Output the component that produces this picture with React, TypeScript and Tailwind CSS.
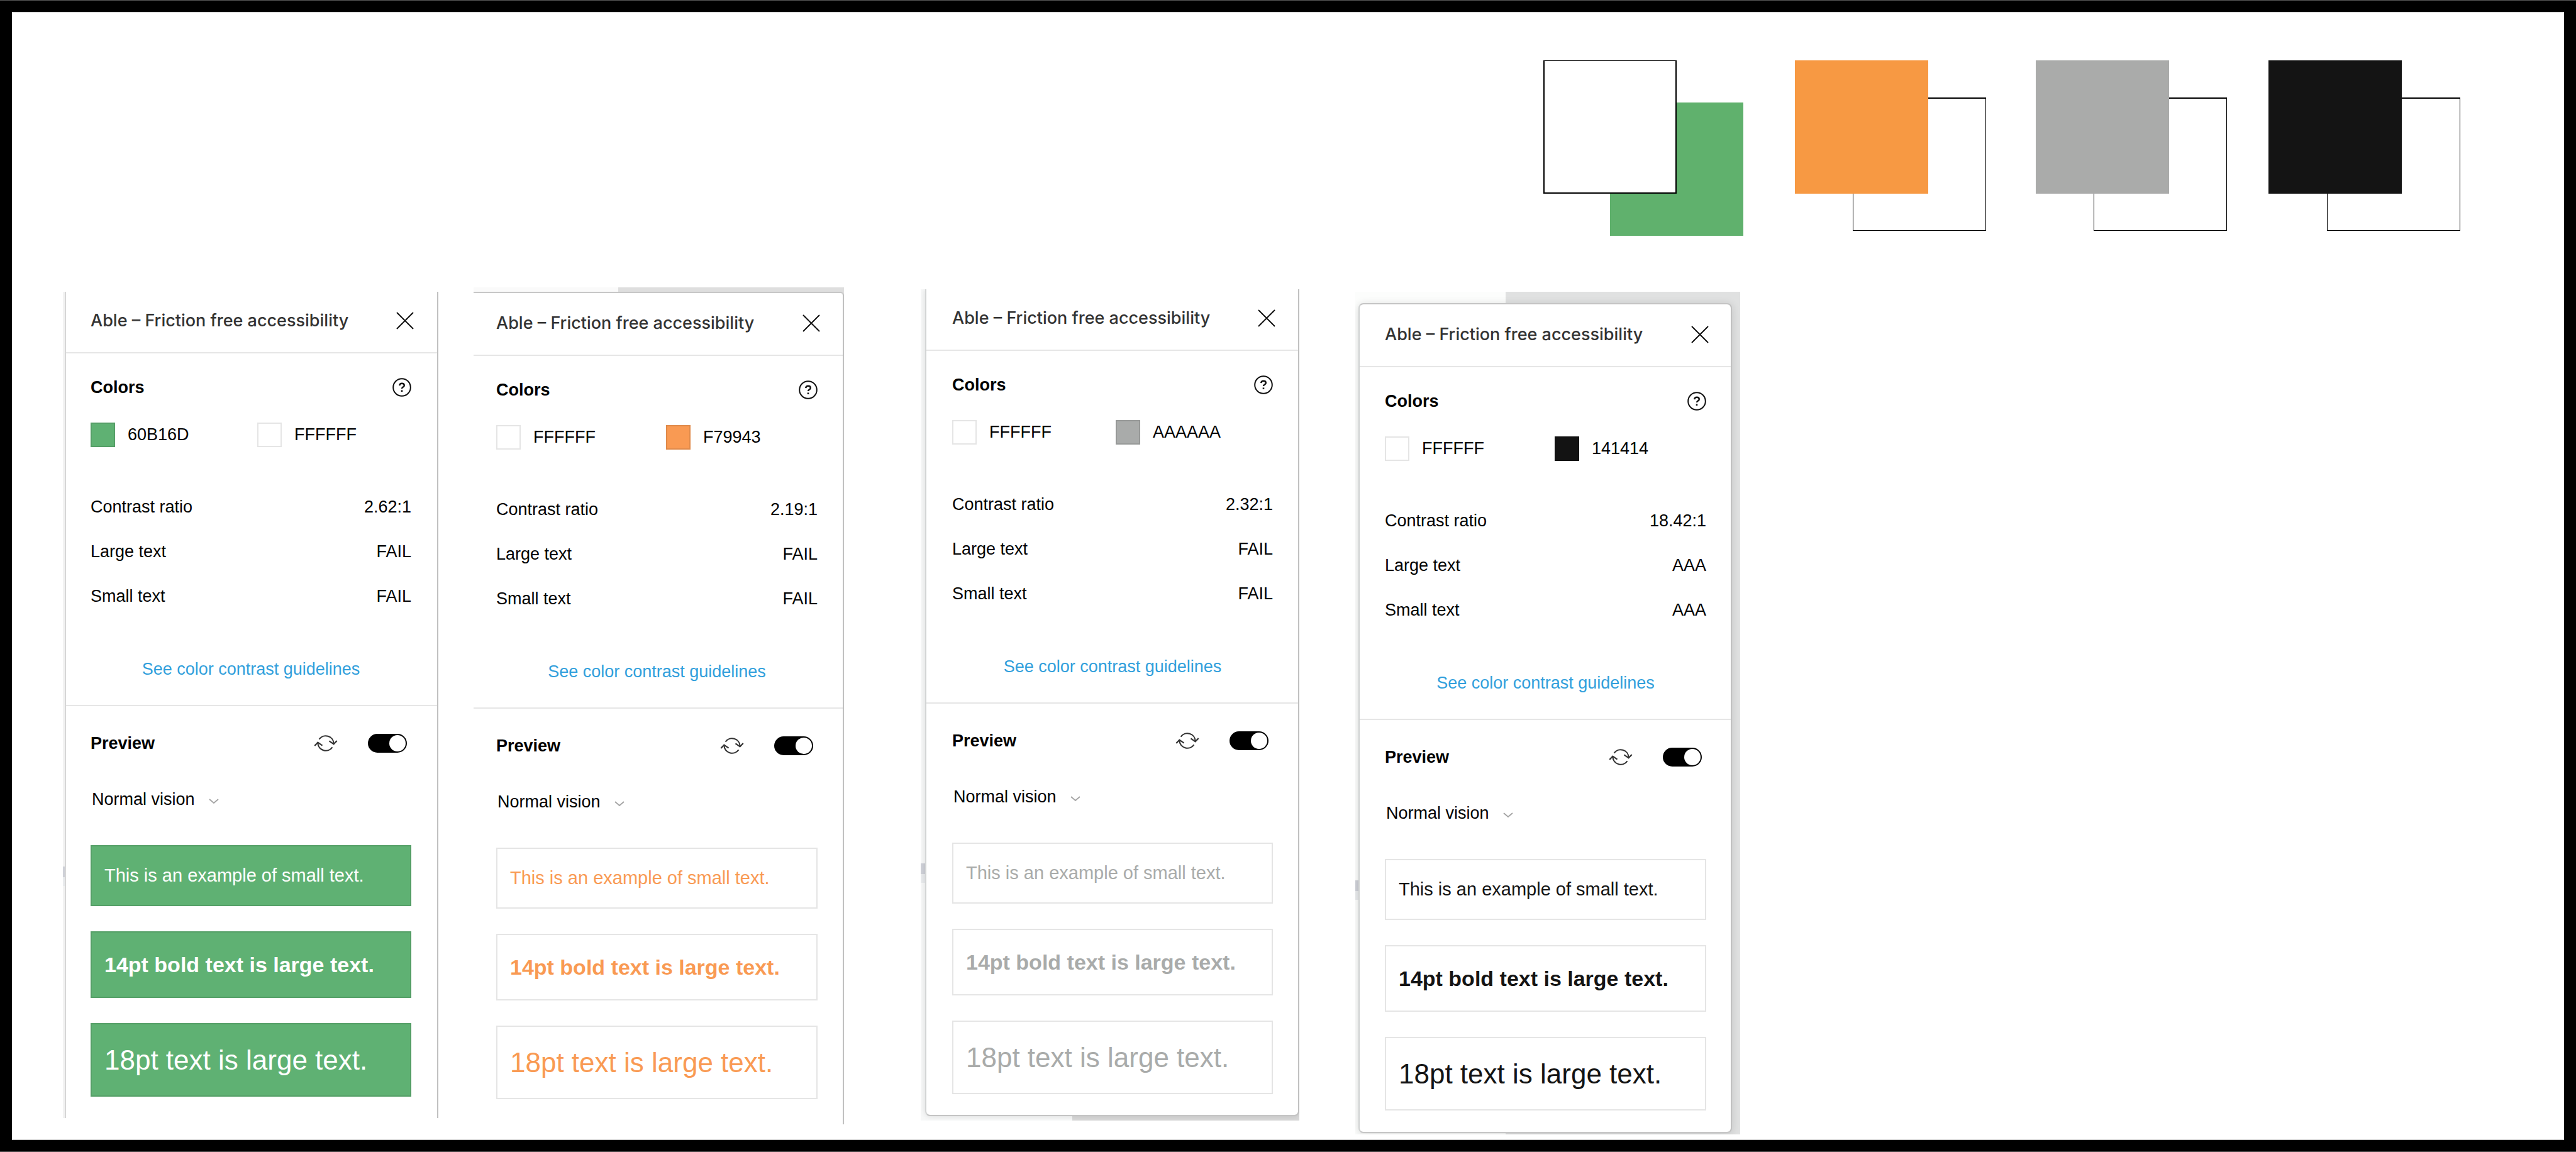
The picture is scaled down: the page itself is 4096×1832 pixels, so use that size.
import React from "react";

type PanelData = {
  id: string;
  first: { hex: string; fill: string };
  second: { hex: string; fill: string };
  firstColumn: string;
  ratio: string;
  large: string;
  small: string;
  sample: string;
  frame: string;
  card: string;
  side: string;
  backdrop?: string;
  edgeMark?: string;
};

const panels: PanelData[] = [
  {
    id: "green",
    first: { hex: "60B16D", fill: "bg-[#5fb173]" },
    second: { hex: "FFFFFF", fill: "bg-white" },
    firstColumn: "w-[265px]",
    ratio: "2.62:1",
    large: "FAIL",
    small: "FAIL",
    sample: "bg-[#5fb173] text-white",
    frame: "col-start-2 mt-[7px] bg-[#f3f3f3] pl-[3px]",
    card: "border-x-2 border-l-[#d6d6d6] border-r-[#c0c0c0] pb-[34px]",
    side: "pl-[39px] pr-[41px]",
    edgeMark: "left-0 top-[914px] w-[4px]",
  },
  {
    id: "orange",
    first: { hex: "FFFFFF", fill: "bg-white" },
    second: { hex: "F79943", fill: "bg-[#f99a53]" },
    firstColumn: "w-[270px]",
    ratio: "2.19:1",
    large: "FAIL",
    small: "FAIL",
    sample: "bg-white text-[#f99a53]",
    frame: "col-start-4 bg-[#fafafa] pt-[7px]",
    card: "rounded-tr-md border-r-2 border-t-2 border-r-[#c0c0c0] border-t-[#b9b9b9]/80 pb-[40px] pt-[2px]",
    side: "pl-[36px] pr-[40px]",
    backdrop: "right-0 top-0 h-[14px] w-[61%] bg-[#dedede]",
  },
  {
    id: "gray",
    first: { hex: "FFFFFF", fill: "bg-white" },
    second: { hex: "AAAAAA", fill: "bg-[#a9abaa]" },
    firstColumn: "w-[260px]",
    ratio: "2.32:1",
    large: "FAIL",
    small: "FAIL",
    sample: "bg-white text-[#a9abaa]",
    frame: "col-start-6 mt-[3px] bg-[#f7f8f8] pb-[7px] pl-[7px]",
    card: "rounded-b-lg border-x-2 border-b-2 border-b-[#c4c4c4] border-l-[#d3d5d5] border-r-[#c0c0c0] pb-[33px] shadow-[0_0_10px_rgba(0,0,0,0.12)]",
    side: "pl-[41px] pr-[40px]",
    backdrop: "bottom-0 right-0 h-[14px] w-[60%] bg-[#d8d8d8]",
    edgeMark: "left-0 top-[913px] w-[8px]",
  },
  {
    id: "black",
    first: { hex: "FFFFFF", fill: "bg-white" },
    second: { hex: "141414", fill: "bg-[#131313]" },
    firstColumn: "w-[270px]",
    ratio: "18.42:1",
    large: "AAA",
    small: "AAA",
    sample: "bg-white text-[#141414]",
    frame: "col-start-8 mt-[7px] bg-[#fcfdfc] pb-[2px] pl-[5px] pr-[13px] pt-[18px]",
    card: "rounded-lg border-2 border-b-[#c6c6c6] border-l-[#cfd1d1] border-r-[#c0c0c0] border-t-[#c4c4c4] pb-[34px] pt-[2px] shadow-[0_2px_14px_rgba(0,0,0,0.14)]",
    side: "pl-[40px] pr-[39px]",
    backdrop: "bottom-0 right-0 top-0 w-[61%] bg-[#e0e1e1]",
    edgeMark: "left-0 top-[936px] w-[7px]",
  },
];

const body = "text-[27px] leading-[40px]";

function CloseIcon() {
  return (
    <svg viewBox="0 0 28 28" className="size-7" fill="none" stroke="#111" strokeWidth="2" aria-hidden="true">
      <path d="M1 1 27 27M27 1 1 27" />
    </svg>
  );
}

function HelpIcon() {
  return (
    <svg viewBox="0 0 30 30" className="size-[30px]" fill="none" stroke="#111" strokeWidth="2" aria-hidden="true">
      <circle cx="15" cy="15" r="13.8" />
      <path d="M11.2 12.2c.2-2.3 1.7-3.5 3.8-3.5 2.2 0 3.8 1.2 3.8 3.2 0 2.7-3.8 2.6-3.8 5.2" strokeWidth="2.4" />
      <path d="M15 19.4v2.6" strokeWidth="2.6" />
    </svg>
  );
}

function RefreshIcon() {
  return (
    <svg viewBox="0 0 41 33" className="h-[30px] w-[38px]" fill="none" stroke="#333" strokeWidth="2.4" aria-hidden="true">
      <path d="M9 9.5A14 14 0 0 1 34.4 17" />
      <path d="M26.5 12.5 34.4 18 40 12" />
      <path d="M32 23.5A14 14 0 0 1 6.6 16" />
      <path d="M14.5 20.5 6.6 15 1 21" />
    </svg>
  );
}

function ChevronIcon() {
  return (
    <svg viewBox="0 0 16 8" className="h-2 w-4" fill="none" stroke="#a3a3a3" strokeWidth="1.8" aria-hidden="true">
      <path d="m1 1 7 6 7-6" />
    </svg>
  );
}

function Swatch({ hex, fill, width = "" }: { hex: string; fill: string; width?: string }) {
  return (
    <div className={`flex items-center gap-5 ${width}`}>
      <span className={`size-[39px] shrink-0 border-2 border-black/10 ${fill}`} />
      <span className="text-[27px] leading-[39px]">{hex}</span>
    </div>
  );
}

function Result({ label, value }: { label: string; value: string }) {
  return (
    <div className="flex h-[71px] items-center justify-between">
      <dt>{label}</dt>
      <dd>{value}</dd>
    </div>
  );
}

function Panel({ data }: { data: PanelData }) {
  return (
    <article className={`relative min-w-0 self-start overflow-hidden ${data.frame}`}>
      {data.backdrop && <div className={`absolute ${data.backdrop}`} />}
      {data.edgeMark && (
        <div className={`absolute ${data.edgeMark}`}>
          <div className="h-[17px] bg-[#cfd1d8]" />
          <div className="h-[14px] bg-[#e9ebed]" />
        </div>
      )}
      <div className={`relative bg-white ${data.card}`}>
        <header className={`flex h-[98px] items-center justify-between border-b-2 border-[#e6e6e6] pb-1 ${data.side}`}>
          <h2 className="whitespace-nowrap font-['Inter'] text-[27px] font-medium leading-[40px] text-[#333]">
            Able – Friction free accessibility
          </h2>
          <button type="button" aria-label="Close" className="-mr-1">
            <CloseIcon />
          </button>
        </header>

        <section className={`border-b-2 border-[#e6e6e6] pb-[37px] pt-[34px] ${data.side}`}>
          <div className="flex items-center justify-between">
            <h3 className={`font-bold ${body}`}>Colors</h3>
            <button type="button" aria-label="Help">
              <HelpIcon />
            </button>
          </div>
          <div className="mt-[36px] flex">
            <Swatch hex={data.first.hex} fill={data.first.fill} width={data.firstColumn} />
            <Swatch hex={data.second.hex} fill={data.second.fill} />
          </div>
          <dl className={`mt-[59px] ${body}`}>
            <Result label="Contrast ratio" value={data.ratio} />
            <Result label="Large text" value={data.large} />
            <Result label="Small text" value={data.small} />
          </dl>
          <p className={`mt-[61px] text-center ${body}`}>
            <a href="#guidelines" className="text-[#319fdc]">
              See color contrast guidelines
            </a>
          </p>
        </section>

        <section className={`pt-[39px] ${data.side}`}>
          <div className="flex items-center justify-between">
            <h3 className={`font-bold ${body}`}>Preview</h3>
            <div className="flex items-center gap-12 pr-[7px]">
              <button type="button" aria-label="Refresh preview">
                <RefreshIcon />
              </button>
              <input
                type="checkbox"
                defaultChecked
                aria-label="Show preview"
                className="flex h-[30px] w-[62px] appearance-none justify-end rounded-full border-2 border-black bg-black before:size-[26px] before:rounded-full before:bg-white"
              />
            </div>
          </div>
          <div className="mt-[49px] flex">
            <div className="relative flex items-center">
              <select
                aria-label="Vision type"
                className={`h-10 appearance-none bg-transparent pl-[2px] pr-[38px] ${body}`}
                defaultValue="normal"
              >
                <option value="normal">Normal vision</option>
              </select>
              <div className="pointer-events-none absolute right-0 top-[19px]">
                <ChevronIcon />
              </div>
            </div>
          </div>
          <div className="mt-[53px] flex flex-col gap-10 whitespace-nowrap">
            <p className={`flex h-[97px] items-center border-2 border-black/10 pl-5 text-[29px] ${data.sample}`}>
              This is an example of small text.
            </p>
            <p className={`flex h-[106px] items-center border-2 border-black/10 pl-5 text-[34px] font-bold ${data.sample}`}>
              14pt bold text is large text.
            </p>
            <p className={`flex h-[117px] items-center border-2 border-black/10 pl-5 text-[44px] ${data.sample}`}>
              18pt text is large text.
            </p>
          </div>
        </section>
      </div>
    </article>
  );
}

function SquarePair({ place, front, back }: { place: string; front: string; back: string }) {
  return (
    <div className={`grid ${place}`}>
      <div className={`col-start-1 row-start-1 size-[212px] place-self-end ${back}`} />
      <div className={`col-start-1 row-start-1 size-[212px] ${front}`} />
    </div>
  );
}

export default function App() {
  return (
    <div className="flex min-h-screen flex-col border-y border-[#585858] bg-black px-[19px] py-[18px] font-['Liberation_Sans',sans-serif] text-black">
      <main className="flex-1 bg-white shadow-[inset_0_1px_0_#ccc,inset_0_-1px_0_#bbb]">
        <div className="grid grid-cols-[2435fr_318fr_82fr_304fr_79fr_304fr_66fr_305fr_165fr] items-start pt-[77px]">
          <SquarePair
            place="col-start-2 h-[279px]"
            front="border-2 border-t border-black bg-white"
            back="bg-[#60b16d]"
          />
          <SquarePair place="col-start-4 h-[271px]" front="bg-[#f79943]" back="border border-t-2 border-black" />
          <SquarePair place="col-start-6 h-[271px]" front="bg-[#aaabaa]" back="border border-t-2 border-black" />
          <SquarePair place="col-start-8 h-[271px]" front="bg-[#141414]" back="border border-t-2 border-black" />
        </div>
        <div className="mt-[82px] grid grid-cols-[81fr_597fr_56fr_589fr_122fr_602fr_89fr_612fr_1310fr]">
          {panels.map((panel) => (
            <Panel key={panel.id} data={panel} />
          ))}
        </div>
      </main>
    </div>
  );
}
